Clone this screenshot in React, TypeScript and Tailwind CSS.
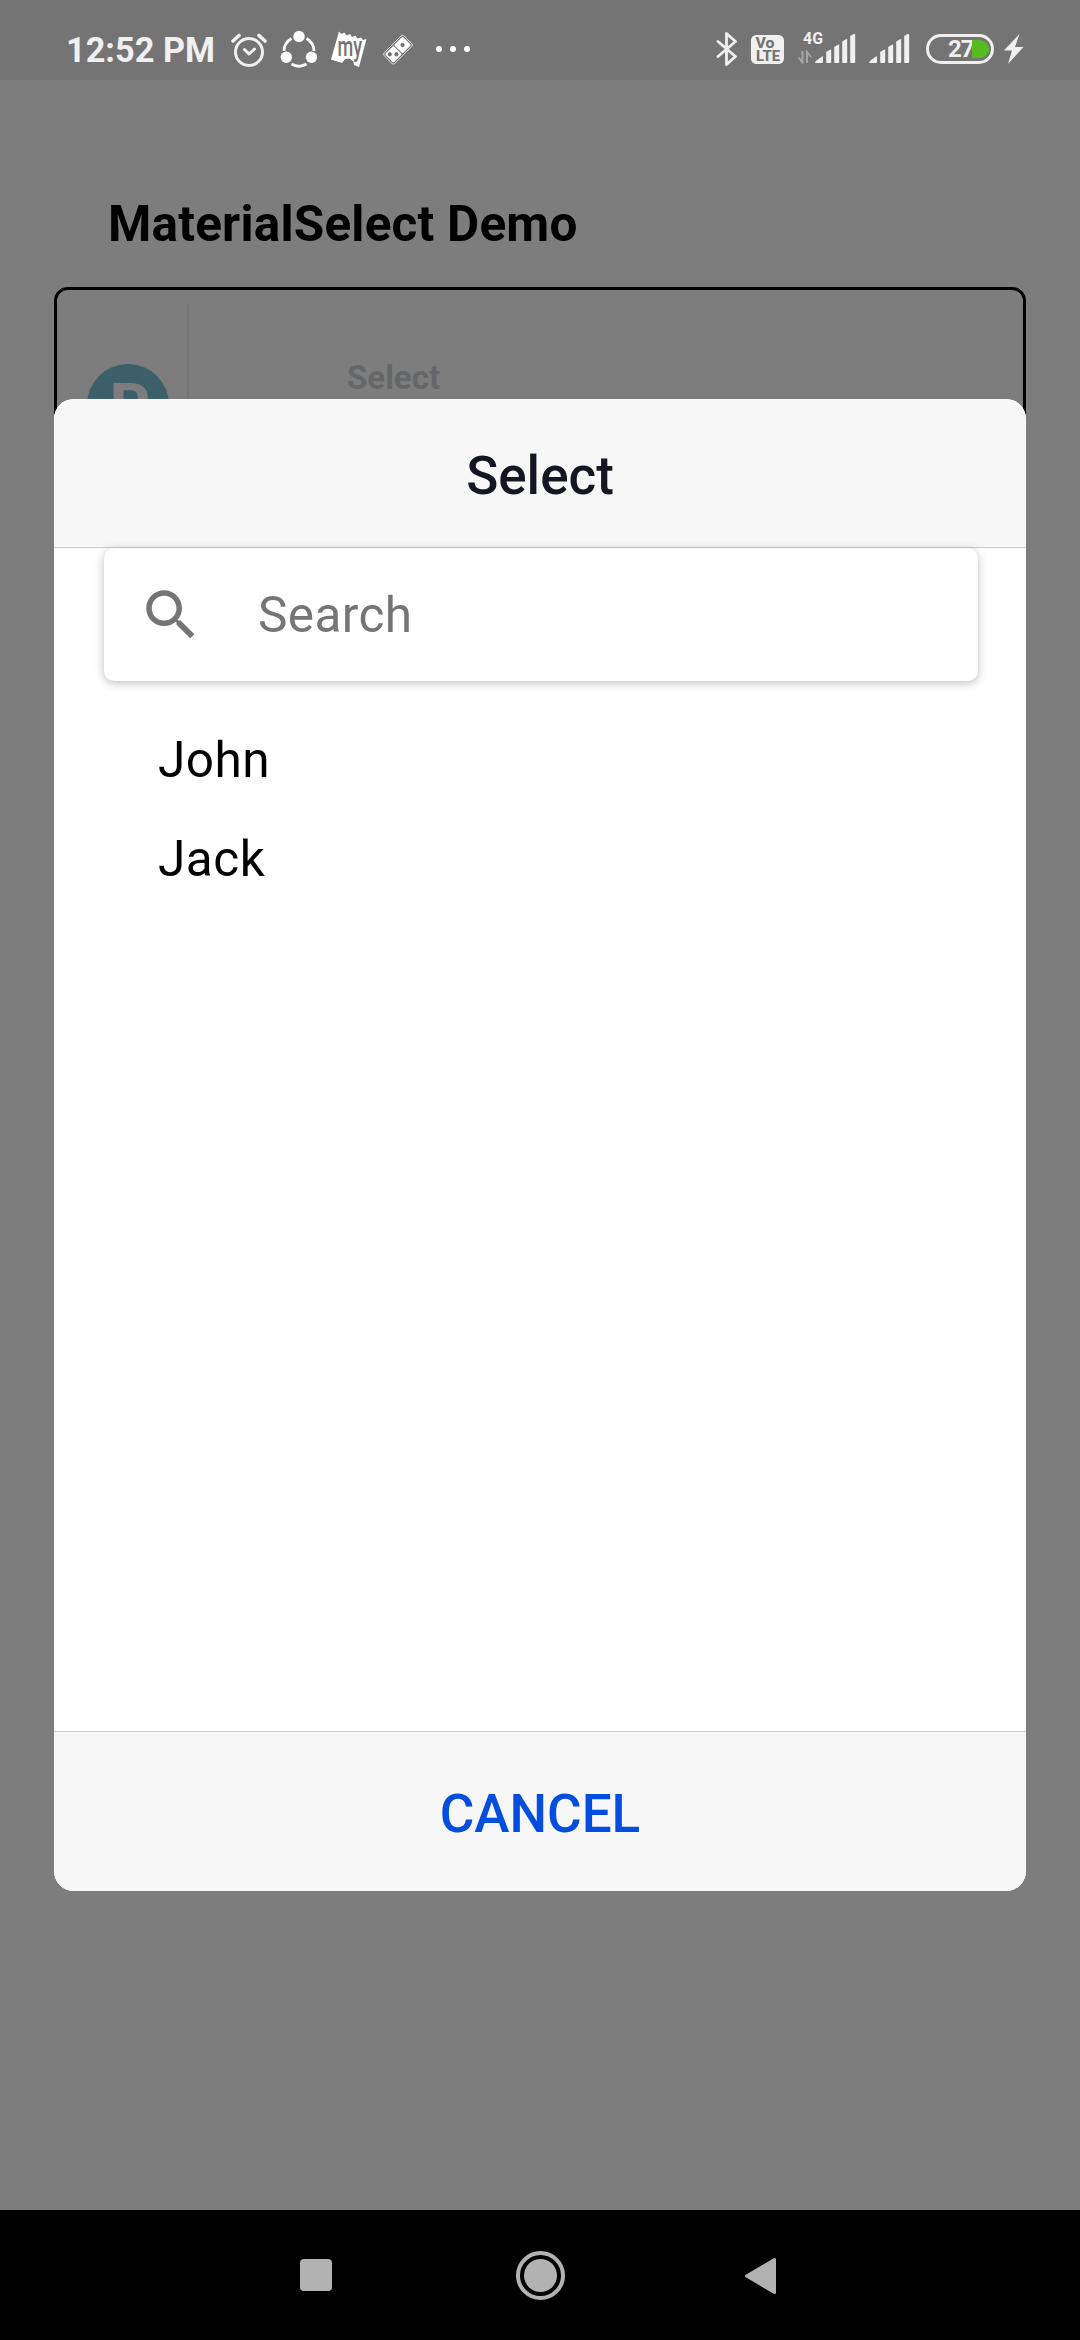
import React from 'react';

function Signal() {
  return (
    <svg className="h-[30px] w-[41px] shrink-0" viewBox="0 0 41 30" fill="#f0f0f0">
      <path d="M0 29q0-1.500 1.500-2.500L7 22.500q1-.5 1 .5v5q0 1-1 1H1q-1 0-1-1z" />
      <path d="M11.200 18q4-3 5-2.500V28q0 1-1 1h-3q-1 0-1-1z" />
      <path d="M19.200 13q4-3 5-2.500V28q0 1-1 1h-3q-1 0-1-1z" />
      <path d="M27.200 7.500q4-3 5-2.500v23q0 1-1 1h-3q-1 0-1-1z" />
      <path d="M35.200 2q3.500-2.500 5-1.700V28q0 1-1 1h-3q-1 0-1-1z" />
    </svg>
  );
}

function StatusBar() {
  return (
    <header className="relative flex h-20 shrink-0 items-start bg-[#747474] pl-[66px] text-[#f0f0f0]">
      <span className="mt-[30px] w-[163px] whitespace-nowrap text-[34.300px] font-bold leading-10">12:52 PM</span>
      <svg className="mt-[30px] h-10 w-10 shrink-0" viewBox="0 0 40 40" fill="none" stroke="#f0f0f0" strokeWidth="3" strokeLinecap="round" strokeLinejoin="round">
        <circle cx="20" cy="22" r="13.500" />
        <path d="M15.500 19.500l4.500 4.500 5.500-5" />
        <path d="M4 11l6-5.500M30 5.500l6 5.500" strokeWidth="3.600" />
      </svg>
      <svg className="ml-[10px] mt-[30px] h-10 w-10 shrink-0" viewBox="0 0 40 40" fill="#fff">
        <path d="M12.500 8.500Q5 13 5 21M27.500 8.500Q35 13 35 21M12.500 34Q20 38.500 27.500 34" fill="none" stroke="#fff" strokeWidth="2.800" />
        <circle cx="20" cy="6.500" r="5.700" />
        <circle cx="7.300" cy="27.200" r="5.700" />
        <circle cx="32.500" cy="27.200" r="5.700" />
      </svg>
      <svg className="ml-[10px] mt-[30px] h-10 w-10 shrink-0" viewBox="0 0 40 40">
        <path d="M10 1.500l2.500 2.500 3-1.500 2 3 3.500-1.500 2 3 3.500-1.500 2 3 3.500-1 2 2.500 3.500-1-7.500 28-5-2-.5-3.500-4-3-4.500.5-3 4-11-3.500z" fill="#fff" />
        <text x="8.500" y="25.500" fill="#747474" fontSize="27" fontWeight="500" textLength="24.500" lengthAdjust="spacingAndGlyphs">my</text>
      </svg>
      <svg className="ml-[10px] mt-[30px] h-10 w-10 shrink-0" viewBox="0 0 40 40">
        <g transform="rotate(-45 20 20)">
          <rect x="5.500" y="11.500" width="28" height="15" rx="2" fill="none" stroke="#e8e8e8" strokeWidth=".9" />
          <rect x="7" y="13" width="12" height="12" rx="1" fill="#fff" />
          <rect x="20" y="13" width="12" height="12" rx="1" fill="#fff" />
          <circle cx="10.500" cy="16.500" r="2.100" fill="#747474" />
          <circle cx="15.200" cy="21.200" r="2.100" fill="#747474" />
          <circle cx="26" cy="19" r="2.100" fill="#747474" />
        </g>
      </svg>
      <div className="ml-[17px] mt-[46px] flex gap-2">
        <i className="size-[6px] rounded-sm bg-white" />
        <i className="size-[6px] rounded-sm bg-white" />
        <i className="size-[6px] rounded-sm bg-white" />
      </div>
      <div className="absolute left-[716px] top-0 flex items-start">
        <svg className="mt-8 h-[34px] w-[22px] shrink-0" viewBox="0 0 22 34" fill="none" stroke="#f0f0f0" strokeWidth="2.800" strokeLinejoin="round" strokeLinecap="round">
          <path d="M2 9.500l17.500 15-9 8V1.500l9 8L2 24.500" />
        </svg>
        <svg className="ml-[13px] mt-[35px] h-[29px] w-[33px] shrink-0" viewBox="0 0 33 29">
          <rect width="33" height="29" rx="5.500" fill="#f0f0f0" />
          <text x="4.500" y="13" fill="#747474" fontSize="14" fontWeight="800" textLength="19" lengthAdjust="spacingAndGlyphs">Vo</text>
          <text x="5" y="26" fill="#747474" fontSize="14.500" fontWeight="800" textLength="24" lengthAdjust="spacingAndGlyphs">LTE</text>
        </svg>
        <svg className="ml-[14px] mt-[30px] h-[34px] w-[26px] shrink-0" viewBox="0 0 26 34">
          <text x="5" y="14" fill="#f0f0f0" fontSize="16" fontWeight="700" textLength="20" lengthAdjust="spacingAndGlyphs">4G</text>
          <path d="M.5 27.500l4 5V21M9 33V22l4 5" fill="none" stroke="#a6a6a6" strokeWidth="2" />
        </svg>
        <div className="-ml-[9px] mt-[34px] flex gap-[13px]">
          <Signal />
          <Signal />
        </div>
        <div className="ml-4 mt-[34px] flex h-[30px] w-[68px] items-center rounded-full border-[3px] border-[#f0f0f0] pl-[19px]">
          <span className="w-6 text-[24px] font-bold leading-[30px] tracking-[-1px]">27</span>
          <i className="h-[18px] w-[17px] rounded-r-full bg-[#58bb1f]" />
        </div>
        <svg className="ml-[10px] mt-[34px] h-[30px] w-5 shrink-0" viewBox="0 0 20 30" fill="#f0f0f0">
          <path d="M15.500 0L0 16.500h8L4 30l15.500-17H11z" />
        </svg>
      </div>
    </header>
  );
}

function SelectModal() {
  return (
    <section className="absolute left-[54px] top-[399px] flex h-[1492px] w-[972px] flex-col overflow-hidden rounded-[20px] bg-white">
      <div className="flex h-[149px] shrink-0 items-center justify-center border-b border-[#cdced0] bg-[#f7f7f7] pt-[8px] text-[53px] font-medium text-[#131722]">Select</div>
      <div className="ml-[50px] mr-[48px] flex h-[133px] shrink-0 items-center rounded-[10px] bg-white pl-[34px] shadow-[0_2px_10px_rgba(0,0,0,0.26)]">
        <svg className="size-[66px]" viewBox="0 0 24 24" fill="#757575">
          <path d="M15.500 14h-.79l-.28-.27C15.410 12.590 16 11.110 16 9.500 16 5.910 13.090 3 9.500 3S3 5.910 3 9.500 5.910 16 9.500 16c1.610 0 3.090-.59 4.230-1.570l.27.28v.79l5 4.990L20.490 19l-4.990-5zm-6 0C7.010 14 5 11.990 5 9.500S7.010 5 9.500 5 14 7.010 14 9.500 11.990 14 9.500 14z" />
        </svg>
        <span className="ml-[54px] mt-px text-[49.500px] tracking-[0.4px] text-[#757575]">Search</span>
      </div>
      <ul className="mt-[30px] grow pl-[104px] text-[49.500px] leading-[99px] tracking-[0.5px] text-black">
        <li>John</li>
        <li>Jack</li>
      </ul>
      <button className="h-[160px] shrink-0 border-t border-[#cdced0] bg-[#f7f7f7] pt-[6px] text-[53px] font-medium text-[#034ddf]">CANCEL</button>
    </section>
  );
}

export default function App() {
  return (
    <div className="relative flex h-[2340px] w-[1080px] flex-col overflow-hidden bg-[#7d7d7d] font-['Roboto',sans-serif]">
      <StatusBar />
      <main className="grow">
        <h1 className="ml-[108px] mt-[114px] text-[49.500px] font-bold leading-[60px] tracking-[0.2px] text-black">MaterialSelect Demo</h1>
        <div className="ml-[54px] mt-[33px] flex h-60 w-[972px] items-start rounded-[14px] border-[3px] border-black">
          <div className="ml-[30px] mt-[74px] flex size-[82px] shrink-0 items-center justify-center rounded-full bg-[#3c5f6a] text-[59px] font-extrabold text-[#7d7d7d]">
            <span className="ml-[5px] scale-x-105">P</span>
          </div>
          <div className="ml-[18px] mt-[14px] h-[200px] w-[2px] shrink-0 bg-[#747474]" />
          <span className="ml-[158px] mt-[68px] text-[33px] font-bold leading-10 text-[#656668]">Select</span>
        </div>
      </main>
      <nav className="flex h-[130px] shrink-0 items-center bg-black pl-[300px]">
        <i className="size-8 rounded-sm bg-[#b2b2b2]" />
        <svg className="ml-[184px] mt-px size-[49px]" viewBox="0 0 49 49">
          <circle cx="24.500" cy="24.500" r="22.500" fill="none" stroke="#b2b2b2" strokeWidth="4" />
          <circle cx="24.500" cy="24.500" r="16.500" fill="#b2b2b2" />
        </svg>
        <svg className="ml-[179px] mt-px h-[38px] w-8" viewBox="0 0 32 38" fill="#b2b2b2" stroke="#b2b2b2" strokeWidth="3" strokeLinejoin="round">
          <path d="M30.500 2.500v33L2.500 19z" />
        </svg>
      </nav>
      <SelectModal />
    </div>
  );
}
